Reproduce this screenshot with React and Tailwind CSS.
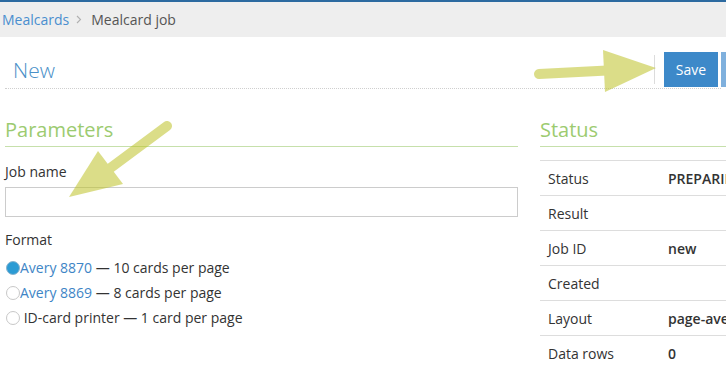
import React from 'react';

const statusRows = [
  ['Status', 'PREPARING'],
  ['Result', ''],
  ['Job ID', 'new'],
  ['Created', ''],
  ['Layout', 'page-avery-8870'],
  ['Data rows', '0'],
];

function Radio({ checked }) {
  return (
    <span
      className={
        'inline-block w-[14px] h-[14px] rounded-full border shrink-0 ' +
        (checked ? 'bg-[#2b9bd4] border-[#8ab4cf]' : 'bg-white border-[#c8c8c8]')
      }
    />
  );
}

function Arrows() {
  // yellow annotation arrows drawn over the screenshot
  return (
    <svg className="absolute inset-0 pointer-events-none" width="726" height="380">
      <g opacity="0.55">
        <line x1="539" y1="74" x2="617" y2="70" stroke="#bec328" strokeWidth="10" strokeLinecap="round" />
        <polygon points="603,50 656,68 605,92" fill="#bec328" />
      </g>
      <g opacity="0.55">
        <line x1="167" y1="126" x2="101" y2="175" stroke="#bec328" strokeWidth="10" strokeLinecap="round" />
        <polygon points="98,151 123,184 69,197" fill="#bec328" />
      </g>
    </svg>
  );
}

export default function App() {
  return (
    <div className="relative w-[726px] h-[380px] overflow-hidden bg-white text-[14px] text-[#333] font-['Open_Sans',sans-serif]">
      {/* Breadcrumb */}
      <div className="border-t-2 border-[#2c6aa0] bg-[#eeeeee] h-[37px] flex items-center px-[2px]">
        <span className="text-[#4a8fcf]">Mealcards</span>
        <svg width="6" height="9" viewBox="0 0 6 9" className="ml-[7px] mr-[9px]">
          <path d="M1 1 L4.5 4.5 L1 8" fill="none" stroke="#b0b0b0" strokeWidth="1.1" />
        </svg>
        <span className="text-[#555]">Mealcard job</span>
      </div>

      {/* Page header */}
      <div className="mx-[5px] flex items-end justify-between border-b border-dotted border-[#cfcfcf] pb-[1px] pt-[15px]">
        <h1 className="pl-[8px] self-center text-[21px] leading-[30px] font-light text-[#4a90c8]">New</h1>
        <div className="flex items-center -mr-[50px]">
          <span className="w-px h-[29px] bg-[#dcdcdc] mr-[9px]" />
          <button className="h-[35px] w-[54px] bg-[#3d89c9] text-white">Save</button>
          <button className="h-[35px] w-[50px] ml-[3px] bg-[#7fb0dd]" />
        </div>
      </div>

      {/* Body */}
      <div className="flex gap-[22px] px-[5px]">
        <div className="w-[513px] shrink-0">
          <h2 className="mt-[27px] text-[20px] leading-[28px] pb-[2px] border-b border-[#c6e0ab] text-[#9ccb70]">
            Parameters
          </h2>
          <label className="block mt-[15px] leading-[20px]">Job name</label>
          <div className="mt-[5px] h-[30px] border border-[#cccccc]" />
          <div className="mt-[13px] leading-[20px]">Format</div>
          <div className="mt-[5px] flex flex-col">
            <div className="h-[25px] flex items-center pl-[1px]">
              <Radio checked />
              <span className="text-[#3e85c6]">Avery 8870</span>
              <span>&nbsp;— 10 cards per page</span>
            </div>
            <div className="h-[25px] flex items-center pl-[1px]">
              <Radio />
              <span className="text-[#3e85c6]">Avery 8869</span>
              <span>&nbsp;— 8 cards per page</span>
            </div>
            <div className="h-[25px] flex items-center pl-[1px]">
              <Radio />
              <span>&nbsp;ID-card printer — 1 card per page</span>
            </div>
          </div>
        </div>

        <div className="w-[300px] shrink-0">
          <h2 className="mt-[27px] text-[20px] leading-[28px] pb-[2px] border-b border-[#c6e0ab] text-[#9ccb70]">
            Status
          </h2>
          <div className="mt-[13px]">
            {statusRows.map(([k, v]) => (
              <div key={k} className="h-[35px] flex items-center border-t border-[#dddddd]">
                <span className="w-[128px] pl-[8px]">{k}</span>
                <span className="font-semibold whitespace-nowrap">{v}</span>
              </div>
            ))}
          </div>
        </div>
      </div>

      <Arrows />
    </div>
  );
}
